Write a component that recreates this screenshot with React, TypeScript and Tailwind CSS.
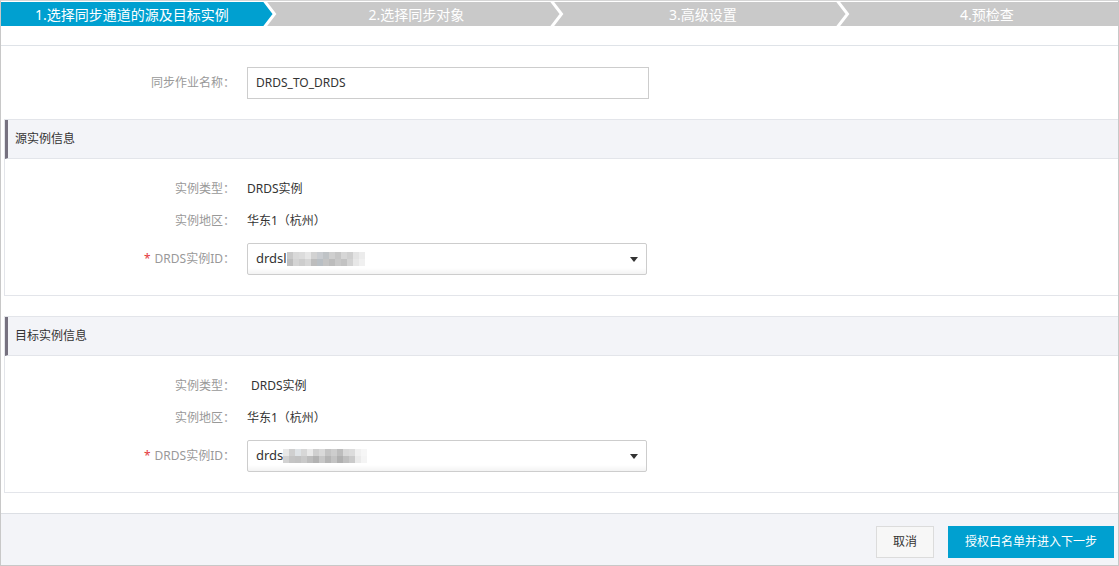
import React from "react";

const FONT = { fontFamily: '"Noto Sans", "Noto Sans CJK SC", sans-serif' };

const steps = [
  { label: "1.选择同步通道的源及目标实例", w: "w-[262px]", active: true },
  { label: "2.选择同步对象", w: "w-[287px]", active: false },
  { label: "3.高级设置", w: "w-[286px]", active: false },
  { label: "4.预检查", w: "flex-1", active: false },
];

// pixelated (masked) part of an instance id
const BLUR_A = [
  ["#c9c9c9", "#d9d9d9", "#dcdcdc", "#e6e6e6", "#d2d2d2", "#c9ccd0", "#bfc3c6", "#cfcfcf", "#c6c6c6", "#d6d6d6", "#cfcfcf", "#e3e3e3", "#ececec"],
  ["#bdbdbd", "#d4d4d4", "#cdcdcd", "#d6d6d6", "#bdbdbd", "#b9bfc4", "#c4c4c4", "#bcbcbc", "#c8c8c8", "#c2c2c2", "#d3d3d3", "#e7e7e7", "#f0f0f0"],
];
const BLUR_B = [
  ["#e8e8e8", "#cfcfcf", "#dfe3e6", "#d7d7d7", "#e9e9e9", "#cfcfcf", "#d9d9d9", "#c4c4c4", "#cdcdcd", "#bdbdbd", "#d8d8d8", "#dcdcdc", "#f0f0f0", "#f6f6f6"],
  ["#d2d2d2", "#c4c4c4", "#c2c2c2", "#c9c9c9", "#bdbdbd", "#b2b2b2", "#c7c7c7", "#b5b5b5", "#c3c3c3", "#b0b0b0", "#bfbfbf", "#cacaca", "#eaeaea", "#f4f4f4"],
];

function Blur({ grid }: { grid: string[][] }) {
  return (
    <span className="inline-flex flex-col">
      {grid.map((row, i) => (
        <span key={i} className="flex">
          {row.map((c, j) => (
            <span key={j} className="w-[6px] h-[7px]" style={{ backgroundColor: c }} />
          ))}
        </span>
      ))}
    </span>
  );
}

function Label({ children, required, inSection }: { children: React.ReactNode; required?: boolean; inSection?: boolean }) {
  return (
    <div className={`${inSection ? "w-[242px]" : "w-[246px]"} shrink-0 pr-[12px] text-right text-[12px] text-[#999]`}>
      {required && <span className="text-[#e4393c] mr-[4px]">*</span>}
      {children}
    </div>
  );
}

function SelectBox({ prefix, grid }: { prefix: string; grid: string[][] }) {
  return (
    <div className="w-[400px] h-[32px] border border-[#cdcdcd] rounded-[2px] bg-gradient-to-b from-white from-80% to-[#f3f3f3] flex items-center pl-[8px] pr-[8px]">
      <span className="text-[13px] text-[#333]">{prefix}</span>
      <Blur grid={grid} />
      <span className="flex-1" />
      <svg width="8" height="5" viewBox="0 0 8 5">
        <path d="M0 0 L8 0 L4 5 Z" fill="#333" />
      </svg>
    </div>
  );
}

function Section({ title, typeIndent, prefix, grid }: { title: string; typeIndent?: boolean; prefix: string; grid: string[][] }) {
  return (
    <div className="ml-[3px] border-t border-b border-l border-[#e3e5ea]">
      <div className="h-[39px] bg-[#f3f4f8] border-l-[3px] border-[#76717f] border-b border-b-[#e3e5ea] flex items-center pl-[7px] text-[12px] text-[#333]">
        {title}
      </div>
      <div className="pt-[14px] pb-[20px]">
        <div className="h-[32px] flex items-center">
          <Label inSection>实例类型：</Label>
          <div className={`text-[12px] text-[#333] ${typeIndent ? "pl-[4px]" : ""}`}>DRDS实例</div>
        </div>
        <div className="h-[32px] flex items-center">
          <Label inSection>实例地区：</Label>
          <div className="text-[12px] text-[#333]">华东1（杭州）</div>
        </div>
        <div className="mt-[6px] flex items-center">
          <Label inSection required>DRDS实例ID：</Label>
          <SelectBox prefix={prefix} grid={grid} />
        </div>
      </div>
    </div>
  );
}

export default function App() {
  return (
    <div style={FONT} className="w-[1119px] h-[566px] bg-white">
      <div className="w-[1119px] h-[566px] border-l border-r border-b border-t border-[#c8c8c8] border-t-[#d6d6d6] flex flex-col">
        {/* step bar */}
        <div className="pt-[1px]">
          <div className="relative flex h-[24px] bg-[#c9c9c9]">
            {steps.map((s, i) => (
              <div
                key={i}
                className={`relative ${s.w} h-full flex items-center justify-center text-[14px] text-white ${s.active ? "bg-[#00a0d0]" : "pl-[20px]"}`}
              >
                {s.label}
                {i < 3 && (
                  <svg className="absolute top-0 left-full z-10" width="16" height="24" viewBox="0 0 16 24">
                    {s.active && <polygon points="0,0 1.5,0 11.5,12 1.5,24 0,24" fill="#00a0d0" />}
                    <polyline points="1.5,-1 11.5,12 1.5,25" fill="none" stroke="#fff" strokeWidth="3" />
                  </svg>
                )}
              </div>
            ))}
          </div>
        </div>

        <div className="mt-[19px] border-t border-[#dfe3e8]" />

        {/* job name */}
        <div className="mt-[21px] flex items-center">
          <Label>同步作业名称：</Label>
          <div className="w-[402px] h-[32px] border border-[#cdcdcd] flex items-center pl-[8px] text-[12px] text-[#333]">
            DRDS_TO_DRDS
          </div>
        </div>

        <div className="mt-[20px]">
          <Section title="源实例信息" prefix="drdsl" grid={BLUR_A} />
        </div>
        <div className="mt-[20px]">
          <Section title="目标实例信息" typeIndent prefix="drds" grid={BLUR_B} />
        </div>

        {/* footer */}
        <div className="mt-[20px] flex-1 bg-[#f3f4f8] border-t border-[#dcdfe4] flex items-start justify-end pt-[12px] pr-[4px] gap-[14px]">
          <button className="w-[58px] h-[32px] bg-[#f7f7f7] border border-[#dcdcdc] text-[12px] text-[#333]">
            取消
          </button>
          <button className="w-[166px] h-[32px] bg-[#00a0d0] text-[12px] text-white">
            授权白名单并进入下一步
          </button>
        </div>
      </div>
    </div>
  );
}
